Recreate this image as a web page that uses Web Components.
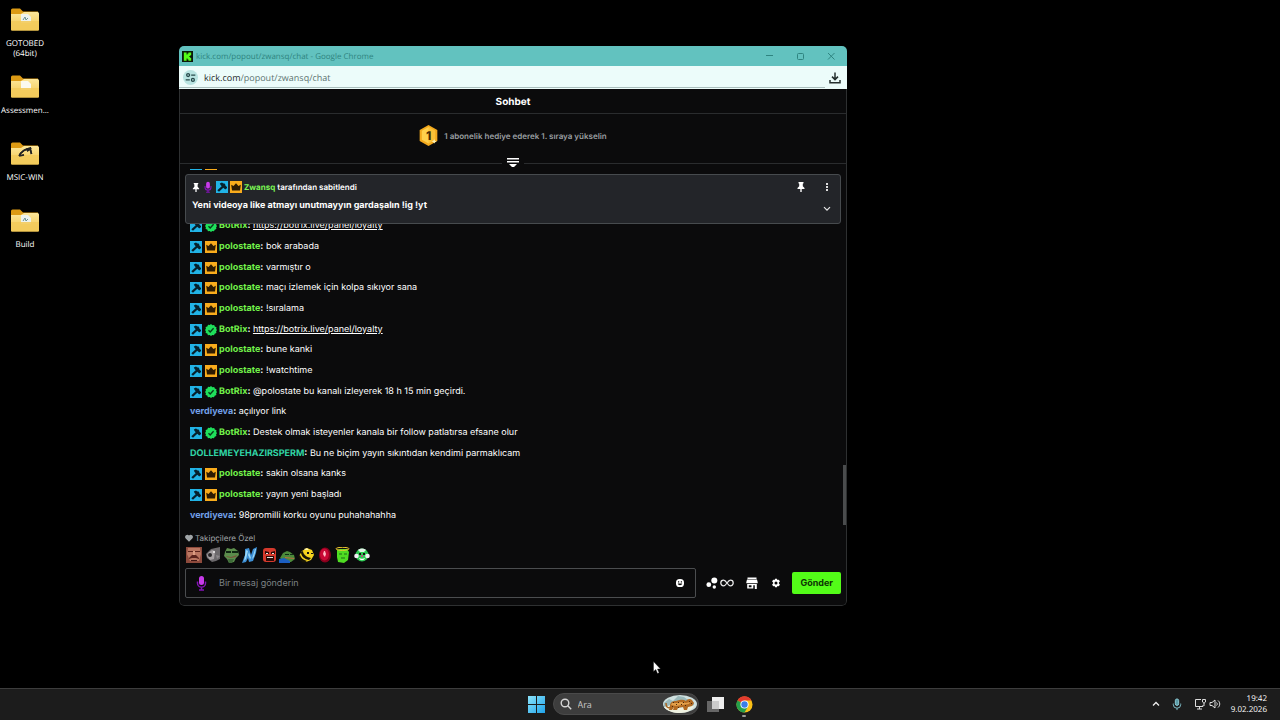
<!DOCTYPE html>
<html lang="tr">
<head>
<meta charset="utf-8">
<title>Masaüstü</title>
<style>
  html, body {
    height: 100%;
    margin: 0;
    background: #000;
    overflow: hidden;
  }
</style>
</head>
<body>
<desk-top>
  <desk-folder slot="files" mark="page">GOTOBED (64bit)</desk-folder>
  <desk-folder slot="files" mark="blank">Assessmen...</desk-folder>
  <desk-folder slot="files" mark="arrow">MSIC-WIN</desk-folder>
  <desk-folder slot="files" mark="page">Build</desk-folder>

  <browser-window slot="window" caption="kick.com/popout/zwansq/chat - Google Chrome" host="kick.com" path="/popout/zwansq/chat">
    <kick-chat>
      <chat-message badges="mod,crown"></chat-message>
      <chat-message></chat-message>
      <chat-message></chat-message>
      <chat-message badges="mod,verified" user="BotRix"><a href="https://botrix.live/panel/loyalty">https://botrix.live/panel/loyalty</a></chat-message>
      <chat-message badges="mod,crown" user="polostate">bok arabada</chat-message>
      <chat-message badges="mod,crown" user="polostate">varmıştır o</chat-message>
      <chat-message badges="mod,crown" user="polostate">maçı izlemek için kolpa sıkıyor sana</chat-message>
      <chat-message badges="mod,crown" user="polostate">!sıralama</chat-message>
      <chat-message badges="mod,verified" user="BotRix"><a href="https://botrix.live/panel/loyalty">https://botrix.live/panel/loyalty</a></chat-message>
      <chat-message badges="mod,crown" user="polostate">bune kanki</chat-message>
      <chat-message badges="mod,crown" user="polostate">!watchtime</chat-message>
      <chat-message badges="mod,verified" user="BotRix">@polostate bu kanalı izleyerek 18 h 15 min geçirdi.</chat-message>
      <chat-message user="verdiyeva" color="#72a0ea">açılıyor link</chat-message>
      <chat-message badges="mod,verified" user="BotRix">Destek olmak isteyenler kanala bir follow patlatırsa efsane olur</chat-message>
      <chat-message user="DOLLEMEYEHAZIRSPERM" color="#31d6a6">Bu ne biçim yayın sıkıntıdan kendimi parmaklıcam</chat-message>
      <chat-message badges="mod,crown" user="polostate">sakin olsana kanks</chat-message>
      <chat-message badges="mod,crown" user="polostate">yayın yeni başladı</chat-message>
      <chat-message user="verdiyeva" color="#72a0ea">98promilli korku oyunu puhahahahha</chat-message>
    </kick-chat>
  </browser-window>

  <task-bar slot="taskbar"></task-bar>
</desk-top>

<script>
const icons = {
  kick: ['0 0 12 12', '<path fill="#0b1a0b" d="M0 0h12v12H0z"/><path fill="#53fc18" d="M2 1.5h3v2.3h1V2.600h1V1.500h3v3H9v1H8v1h1v1h1v3H7V9.400H6V8.200H5v2.300H2z"/>'],
  tune: ['0 0 16 16', '<g fill="none" stroke="#27494a" stroke-width="1.900"><circle cx="4.500" cy="4.500" r="2.100"/><path d="M9 4.500h6M1 11.500h6"/><circle cx="11.500" cy="11.500" r="2.100"/></g>'],
  download: ['0 0 12 12', '<path fill="none" stroke="#26302f" stroke-width="1.500" d="M6 .5v6.700M3 4.600l3 3 3-3M1 8v2.800h10V8"/>'],
  minimize: ['0 0 8 8', '<path fill="none" stroke="#2f8480" d="M1 3.500h7"/>'],
  maximize: ['0 0 8 8', '<rect x="1.500" y="1.500" width="6" height="6" rx="1" fill="none" stroke="#2f8480"/>'],
  close: ['0 0 8 8', '<path fill="none" stroke="#2f8480" d="M1 1l6.500 6.500M7.500 1L1 7.500"/>'],
  mod: ['0 0 12 12', '<path fill="#21b3e6" d="M0 0h12v12H0z"/><path fill="#06202b" d="M3.800 2.600L6 1.400l1.300 1 .9-.2 1.200 1.500.1 1L11 6v1L9.800 8.200H9L7.300 6.800 3 10.800 1.300 9.300 5.700 5.200 4.600 4z"/>'],
  crown: ['0 0 12 12', '<path fill="#f9ac1c" d="M0 0h12v12H0z"/><path fill="#2d1b02" d="M1.200 3.800L3.500 5 6 2.300 8.500 5l2.300-1.200-.8 5.700H2z"/>'],
  verified: ['0 0 12 12', '<path fill="#1fe05b" d="M6 0l1.400 1.200L9.200.9l.6 1.700 1.700.6-.3 1.800L12 6l-.9 1.400.3 1.700-1.700.6-.7 1.600-1.700-.2L6 12l-1.300-1-1.800.2-.6-1.600-1.700-.7L.9 7.300 0 6l.9-1.300L.6 3l1.700-.6L3 .8l1.700.3z"/><path fill="none" stroke="#063b18" stroke-width="1.400" d="M3.500 6.200l1.700 1.700 3.400-3.600"/>'],
  pin: ['0 0 8 10', '<path fill="#fff" d="M1.500 0h5v1.200l-.7.500v2.600L7.500 6v1H4.700v3H3.300V7H.5V6l1.700-1.700V1.700l-.7-.5z"/>'],
  mic: ['0 0 10 16', '<rect x="2.500" y="1" width="5" height="9" rx="2.500" fill="#c83bea"/><path fill="none" stroke="#8213b5" stroke-width="1.500" d="M1 6.500v1.700a4 4 0 0 0 8 0V6.500M5 12.300V15M2.500 15h5"/>'],
  dots: ['0 0 4 10', '<path fill="#ddd" d="M1 1h2v2H1zM1 4h2v2H1zM1 7h2v2H1z"/>'],
  down: ['0 0 8 6', '<path fill="none" stroke="#e6e6e6" stroke-width="1.200" d="M1 1.200l3 3 3-3"/>'],
  collapse: ['0 0 12 10', '<path fill="#fff" d="M0 0h12v1.500H0zM0 3h12v1.500H0zM2 6h8L7 9H5z"/>'],
  rank: ['0 0 20 22', '<path fill="#f3a91d" d="M10 0l9.300 5.200v11.600L10 22 .7 16.800V5.200z"/><path fill="#ffd04c" d="M10 2l7 4v9.500L10 19.500 3 15.500V6z"/><path fill="#f8b72a" d="M17 6v9.500l-7 4V2z" opacity=".6"/><path fill="#fff0b0" d="M16 15l.9 1.500 1.600.7-1.600.8L16 19.500l-.9-1.500-1.600-.8 1.600-.7z"/>'],
  heart: ['0 0 8 8', '<path fill="#a0a5a8" d="M4 7.800L.7 4.400A2.100 2.100 0 0 1 4 1.600a2.100 2.100 0 0 1 3.300 2.800z"/>'],
  smile: ['0 0 10 10', '<rect x="1" y="1" width="8" height="8" rx="3.600" fill="#fff"/><path fill="#0b0b0b" d="M3 3.200h1.200v1.200H3zM5.800 3.200H7v1.200H5.800zM2.800 5.500h4.400c-.2 2.200-4.200 2.200-4.400 0z"/>'],
  bubbles: ['0 0 12 12', '<circle cx="8.300" cy="3.500" r="3" fill="#fff"/><circle cx="2.800" cy="7.700" r="2.400" fill="#fff"/><circle cx="8.300" cy="10" r="1.700" fill="#fff"/>'],
  infinity: ['0 0 14 8', '<path fill="none" stroke="#e9e9e9" stroke-width="1.300" d="M7 4C5.800 2.300 4.900 1.200 3.600 1.200a2.800 2.800 0 0 0 0 5.600C4.900 6.800 5.800 5.700 7 4s2.100-2.800 3.400-2.800a2.800 2.800 0 0 1 0 5.600C9.100 6.800 8.200 5.700 7 4z"/>'],
  store: ['0 0 12 12', '<path fill="#fff" fill-rule="evenodd" d="M1.500.5h9v1.400h-9zM1 2.500h10l.7 2.700v1.100H.3V5.200zM1.200 7h9.600v5H8.800V8.300H7.300V11.500H1.200zM2.800 8.200v2h2.700v-2z"/>'],
  gear: ['0 0 10 10', '<path fill="#fff" fill-rule="evenodd" d="M4 .7h2l.4 1.400 1.500-.4 1 1.700L7.900 4.500v1l1 1.100-1 1.700-1.500-.4L6 9.300H4l-.4-1.400-1.500.4-1-1.700 1-1.100v-1l-1-1.100 1-1.700 1.500.4zM5 3.500A1.500 1.500 0 1 0 5 6.500 1.500 1.500 0 0 0 5 3.500z"/>'],
  windows: ['0 0 17 17', '<defs><linearGradient id="w" x1="0" y1="0" x2="1" y2="1"><stop offset="0" stop-color="#8ce4fb"/><stop offset="1" stop-color="#1fa3ea"/></linearGradient></defs><path fill="url(#w)" d="M0 0h8v8H0zM9 0h8v8H9zM0 9h8v8H0zM9 9h8v8H9z"/>'],
  search: ['0 0 12 12', '<g fill="none" stroke="#d6d6d6" stroke-width="1.400"><circle cx="5" cy="5" r="3.800"/><path d="M7.800 7.800L11.200 11.200"/></g>'],
  leopard: ['0 0 34 18', '<ellipse cx="17" cy="9" rx="17" ry="9" fill="#cfe0df"/><path fill="#9bb9ba" d="M1 8l5-4 4 2 5-5 6 1 4 3 6 3v4H1z"/><path fill="#edf0df" d="M1 12l7-2 12 3 12-3c-3 5-8 8-15 8S4 16 1 12z"/><path fill="#b26a22" d="M7 11c0-4 3-5 6-5 4-1 7-2 10 0 1-2 4-3 6-1l2 3-2 3-4 1-1 3h-3l-1-3-5 1-1 2h-4l1-3-2 3H6z"/><path fill="#e3a04b" d="M9 8h5l4-1 5 1 4-1-1 2-7 1-6 1-5-1z"/><path fill="none" stroke="#a86522" stroke-width="1.500" d="M8 12c-4 2-5-1-5-4"/><path fill="#4b290c" d="M10 7h1v1h-1zM13 9h1v1h-1zM15 7h1v1h-1zM18 9h1v1h-1zM20 7h1v1h-1zM22 10h1v1h-1zM26 6h1v1h-1zM28 8h1v1h-1zM9 11h1v1H9zM15 12h1v1h-1z"/>'],
  taskview: ['0 0 17 15', '<path fill="#666" d="M0 4h12v11H0z"/><path fill="#eee" d="M5 0h12v12H5z"/><path fill="#ccc" d="M5 4h7v8H5z"/>'],
  chrome: ['0 0 18 18', '<circle cx="9" cy="9" r="8.500" fill="#fbc116"/><path fill="#e33b2e" d="M9 9L1.600 4.700A8.500 8.500 0 0 1 16.400 4.700H9z"/><path fill="#249f4b" d="M9 9L1.600 4.700A8.500 8.500 0 0 0 9 17.500l3.700-6.400z"/><circle cx="9" cy="9" r="4.300" fill="#fff"/><circle cx="9" cy="9" r="3.400" fill="#3a7de8"/>'],
  up: ['0 0 8 6', '<path fill="none" stroke="#eee" stroke-width="1.300" d="M1 4.500l3-3 3 3"/>'],
  traymic: ['0 0 10 14', '<rect x="3.200" y="1" width="3.600" height="7" rx="1.800" fill="#5a9aa5" stroke="#90d2dc"/><path fill="none" stroke="#84c6d0" d="M1 6v1a4 4 0 0 0 8 0V6M5 11v2"/>'],
  network: ['0 0 12 12', '<path fill="none" stroke="#ddd" d="M7 1.500H1.500v7H9V7M3 11h5M5.500 8.500V11M10 5v3"/><path fill="none" stroke="#ddd" d="M8.500 1.500h3V4L10 5.200 8.500 4z"/>'],
  speaker: ['0 0 12 12', '<path fill="none" stroke="#ddd" d="M1 4.500h2L6 2v8L3 7.500H1zM7.500 4.500c1 1 1 2 0 3M9 2.500c2.300 2 2.300 5 0 7"/>'],
  cursor: ['0 0 8 13', '<path fill="#fff" stroke="#111" stroke-width=".4" d="M.5.500v10l2.300-2 1.700 4 1.600-.7-1.600-3.800h3z"/>'],
  // channel emotes
  face: ['0 0 16 16', '<path fill="#8d4a3c" d="M0 0h16v16H0z"/><path fill="#ba7661" d="M2 1h12l1 6-2 7H4L1 7z"/><path fill="#5b241d" d="M2 4h5v1H2zM9 4h5v1H9zM3 11l3-3h4l3 3v1l-3-1H6l-3 1z"/><path fill="#db9d82" d="M7 4h2v4H7z"/><path fill="#3c1513" d="M5 13h6v1H5z"/>'],
  fish: ['0 0 16 16', '<path fill="#6b686b" d="M1 7l5-5 9-2v12l-4 2-4 1-5-4z"/><path fill="#a6a1a3" d="M3 6l4-3 3 1-1 8-4 1-3-4z"/><circle cx="5" cy="8" r="2" fill="#292729"/><circle cx="9" cy="5" r="1" fill="#eee"/><path fill="#8b878a" d="M11 8l4 1-3 3z"/>'],
  frog: ['0 0 16 16', '<path fill="#5b8d4c" d="M2 5l2-4 4 1 3-1 4 3 1 4-3 3-2 4-5 1-2-4-3-3z"/><path fill="#0f2612" d="M3 4h5v2H3zM9 4h6v2H9z"/><path fill="#78523a" d="M3 9l5 1 6-2-1 2-5 1-4-1z"/><path fill="#3e6b38" d="M5 12h6l-2 4H6z"/>'],
  wave: ['0 0 16 16', '<path fill="#3d8fd5" d="M3 2l4-1 2 7 2-6 4-2-1 6-3 8-4 1-1-4-2 4-4 1 3-8z"/><path fill="#9bd7f4" d="M4 3l2 1-2 8-2 2zM13 2l1 0-2 8-2 2zM7 5l2 6-1 1-2-4z"/>'],
  angry: ['0 0 16 16', '<rect x="2" y="1" width="13" height="14" rx="3" fill="#d5392c"/><path fill="#2b0b0a" d="M4 4l4 1v2H4zM10 5l4-1v3h-4zM5 9h8v5H5z"/><path fill="#e9e5df" d="M5 6h2v1H5zM11 6h2v1h-2zM6 10h6v1H6z"/>'],
  pepe: ['0 0 16 16', '<path fill="#4c8a3a" d="M1 11l3-5 4-2 3 1 4 3 1 4-4 3H5z"/><path fill="#102c16" d="M6 7h4v1H6zM11 7h4v1h-4z"/><path fill="#1b5ec2" d="M0 12l5-1 6 3v2H0z"/><path fill="#b96c42" d="M6 10l9 1v1l-9-1z"/>'],
  bee: ['0 0 16 16', '<path fill="#f4d21e" d="M1 9l3-5 5-3 5 2 2 5-3 5-5 2-5-2z"/><path fill="#161406" d="M3 5l2-1c0 3 3 6 8 7l-2 2C6 12 3 9 3 5zM0 9l2-1c1 3 3 5 7 6l-3 2C3 15 1 12 0 9z"/><path fill="#111" d="M9 5h2v2H9zM13 6h2v1h-2z"/><path fill="#fff2a0" d="M6 2l3-1 2 2H7z"/>'],
  gem: ['0 0 16 16', '<ellipse cx="8" cy="8" rx="6" ry="7.500" fill="#89001d"/><ellipse cx="7.500" cy="7.500" rx="4.500" ry="6" fill="#c90735"/><path fill="#ffb7c1" d="M7 4h1l1 3-1 3-1-1-1-2z"/>'],
  angel: ['0 0 16 16', '<path fill="#4fdc22" d="M2 3l3-1h7l2 3-1 8-4 3-6-1-1-5z"/><ellipse cx="7.500" cy="1.800" rx="6.500" ry="1.500" fill="none" stroke="#f3ca31"/><path fill="none" stroke="#1d6d17" d="M4 7h3M9 7h3M6 11h4"/>'],
  clown: ['0 0 16 16', '<circle cx="8" cy="8" r="6.500" fill="#2bc951"/><circle cx="2.500" cy="9" r="2.300" fill="#f3eef5"/><circle cx="13.500" cy="9" r="2.300" fill="#f3eef5"/><path fill="#e4f2e8" d="M4 3c2-2 6-2 8 0l-2 2H6z"/><path fill="#111" d="M5 6h2v2H5zM9 6h2v2H9z"/><circle cx="8" cy="9" r="1" fill="#d3398f"/><path fill="#fff" d="M5 11c2 1 4 1 6 0-1 3-5 3-6 0z"/>']
};

const icon = (name, width, height = width) =>
  `<svg viewBox="${icons[name][0]}" width="${width}" height="${height}" aria-hidden="true">${icons[name][1]}</svg>`;

const base = /* css */ `
  :host, * { box-sizing: border-box; }
  svg { display: block; flex: none; }
  button {
    display: flex;
    align-items: center;
    justify-content: center;
    padding: 0;
    border: 0;
    background: none;
    color: inherit;
    font: inherit;
    cursor: pointer;
  }
`;

class BaseElement extends HTMLElement {
  connectedCallback () {
    if (!this.shadowRoot) this.attachShadow({ mode: 'open' });
    this.shadowRoot.innerHTML = `<style>${base}${this.constructor.styles}</style>${this.render()}`;
  }
}

class DeskTop extends BaseElement {
  static get styles () {
    return /* css */ `
      :host {
        display: flex;
        flex-direction: column;
        height: 100vh;
        color: #fff;
        font-family: "Open Sans", "Noto Sans", sans-serif;
        text-rendering: geometricPrecision;
      }
      main { position: relative; flex: 1; min-height: 0; }
      .files {
        display: grid;
        grid-auto-rows: 67px;
        width: 50px;
        padding-top: 7px;
      }
      ::slotted(browser-window) {
        position: absolute;
        inset: 46px 433px 82px 179px;
      }
      .cursor { position: absolute; left: 51%; top: 661px; }
    `;
  }

  render () {
    return /* html */ `
      <main>
        <div class="files"><slot name="files"></slot></div>
        <slot name="window"></slot>
        <div class="cursor">${icon('cursor', 8, 13)}</div>
      </main>
      <slot name="taskbar"></slot>`;
  }
}

class DeskFolder extends BaseElement {
  static get styles () {
    return /* css */ `
      :host {
        display: flex;
        flex-direction: column;
        align-items: center;
        gap: 8px;
        font-size: 8px;
        line-height: 10px;
        text-align: center;
      }
    `;
  }

  render () {
    const marks = {
      page: '<path fill="#edf3ee" d="M10 7h7l3 3v6H10z"/><path fill="none" stroke="#6b9292" d="M12 13l2-3 1 3 2-2"/>',
      blank: '<path fill="#fbfaf0" d="M10 7h7l3 3v6H10z"/>',
      arrow: '<path fill="none" stroke="#222" stroke-width="1.600" d="M8 15c2-4 6-7 12-8l-4 3M8 15l5-1M19 7l1.500 6"/>'
    };
    const mark = this.getAttribute('mark');
    return /* html */ `
      <svg viewBox="0 0 28 24" width="28" height="24" aria-hidden="true">
        <defs><linearGradient id="f" x1="0" y1="0" x2="0" y2="1"><stop offset="0" stop-color="#fde79a"/><stop offset="1" stop-color="#f2c449"/></linearGradient></defs>
        <path fill="#dc9a14" d="M0 3q0-1.500 1.500-1.500H9l3 3h15V12H0z"/>
        <path fill="url(#f)" d="M0 7h10l3-2h13.500Q28 5 28 6.500v16q0 1-1 1H1q-1 0-1-1z"/>
        ${marks[mark]}
        <path fill="#f3cb5c" opacity=".9" d="M0 14h28v8.500q0 1-1 1H1q-1 0-1-1z"/>
        ${mark === 'arrow' ? marks.arrow : ''}
      </svg>
      <span><slot></slot></span>`;
  }
}

class BrowserWindow extends BaseElement {
  static get styles () {
    return /* css */ `
      :host {
        display: flex;
        flex-direction: column;
        border-radius: 5px;
        overflow: hidden;
      }
      .title {
        display: flex;
        align-items: center;
        gap: 3px;
        height: 20px;
        padding: 0 1px 0 3px;
        background: #62c2bf;
        color: #2f8480;
        font-size: 8px;
      }
      .title span { flex: 1; }
      .title .controls { display: flex; }
      .title button { width: 31px; height: 20px; }
      .address {
        display: flex;
        align-items: center;
        gap: 6px;
        height: 23px;
        padding: 0 6px 0 4px;
        background: linear-gradient(#a9bebc, #a9bebc) left bottom 1px / calc(100% - 22px) 1px no-repeat #ecfcfa;
        color: #5e7472;
        font-size: 9px;
      }
      .address b { color: #1d2b2a; font-weight: 400; }
      .address .url { flex: 1; }
      .address .info {
        width: 15px;
        height: 15px;
        border-radius: 50%;
        background: #b9e4e1;
      }
      ::slotted(*) {
        flex: 1;
        min-height: 0;
        border: 1px solid #2e3031;
        border-top: 0;
        border-radius: 0 0 5px 5px;
      }
    `;
  }

  render () {
    return /* html */ `
      <div class="title">
        ${icon('kick', 11)}
        <span>${this.getAttribute('caption')}</span>
        <div class="controls">
          <button aria-label="Simge durumuna küçült">${icon('minimize', 8)}</button>
          <button aria-label="Ekranı kapla">${icon('maximize', 8)}</button>
          <button aria-label="Kapat">${icon('close', 8)}</button>
        </div>
      </div>
      <div class="address">
        <button class="info" aria-label="Site bilgileri">${icon('tune', 11)}</button>
        <div class="url"><b>${this.getAttribute('host')}</b>${this.getAttribute('path')}</div>
        <button aria-label="İndirilenler">${icon('download', 12)}</button>
      </div>
      <slot></slot>`;
  }
}

class KickChat extends BaseElement {
  static get styles () {
    return /* css */ `
      :host {
        display: flex;
        flex-direction: column;
        background: #0b0b0c;
        color: #fff;
        font: 9px/12px Inter, sans-serif;
      }
      h1 {
        height: 25px;
        margin: 0;
        border-bottom: 1px solid #2a2c2e;
        font-size: 10px;
        line-height: 26px;
        font-weight: 700;
        text-align: center;
      }
      .divider {
        display: flex;
        align-items: center;
        gap: 5px;
        height: 12px;
      }
      .divider::before, .divider::after {
        content: "";
        flex: 1;
        height: 1px;
        background: #2a2c2e;
      }
      .log {
        position: relative;
        flex: 1;
        min-height: 0;
        display: flex;
        flex-direction: column;
        justify-content: flex-end;
        overflow: hidden;
      }
      .rows {
        flex: none;
        display: grid;
        grid-auto-rows: 1fr;
        height: 372px;
        padding: 0 10px;
      }
      pinned-message { position: absolute; inset: 5px 5px auto; }
      .thumb {
        position: absolute;
        right: 0;
        bottom: 1px;
        width: 3px;
        height: 60px;
        background: #4a4c4d;
      }
    `;
  }

  render () {
    return /* html */ `
      <h1>Sohbet</h1>
      <gift-banner rank="1">1 abonelik hediye ederek 1. sıraya yükselin</gift-banner>
      <div class="divider"><button aria-label="Daralt">${icon('collapse', 12, 10)}</button></div>
      <div class="log">
        <div class="rows"><slot></slot></div>
        <pinned-message user="Zwansq">Yeni videoya like atmayı unutmayyın gardaşalın !ig !yt</pinned-message>
        <div class="thumb"></div>
      </div>
      <chat-composer></chat-composer>`;
  }
}

class GiftBanner extends BaseElement {
  static get styles () {
    return /* css */ `
      :host {
        display: flex;
        align-items: center;
        justify-content: center;
        gap: 6px;
        height: 43px;
        color: #9a9ea1;
        font-size: 8px;
        font-weight: 600;
      }
      .rank { display: grid; place-items: center; }
      .rank > * { grid-area: 1 / 1; }
      .rank b { color: #4a2b05; font-size: 12px; font-weight: 800; }
    `;
  }

  render () {
    return /* html */ `
      <div class="rank">${icon('rank', 19, 21)}<b>${this.getAttribute('rank')}</b></div>
      <span><slot></slot></span>`;
  }
}

class PinnedMessage extends BaseElement {
  static get styles () {
    return /* css */ `
      :host {
        display: grid;
        grid-template-columns: 1fr auto;
        grid-template-rows: 14px 22px;
        align-items: center;
        height: 50px;
        padding: 5px 9px 0 6px;
        border: 1px solid #474b4e;
        border-radius: 3px;
        background: #232529;
        font-weight: 600;
      }
      .by { display: flex; align-items: center; gap: 2px; font-size: 8px; }
      .by > :first-child { margin-right: 2px; }
      .by > :nth-child(2) { margin-right: 2px; }
      .by b { color: #7cf655; font-weight: 700; }
      .text { padding-top: 2px; font-weight: 700; }
      .tools { display: flex; gap: 18px; }
      .more { height: 14px; justify-self: end; align-self: end; }
    `;
  }

  render () {
    return /* html */ `
      <div class="by">
        ${icon('pin', 8, 9)}${icon('mic', 8, 12)}${icon('mod', 12)}${icon('crown', 12)}
        <span><b>${this.getAttribute('user')}</b> tarafından sabitlendi</span>
      </div>
      <div class="tools">
        <button aria-label="Sabitlemeyi kaldır">${icon('pin', 8, 10)}</button>
        <button aria-label="Seçenekler">${icon('dots', 8, 10)}</button>
      </div>
      <div class="text"><slot></slot></div>
      <button class="more" aria-label="Genişlet">${icon('down', 8, 6)}</button>`;
  }
}

class ChatMessage extends BaseElement {
  static get styles () {
    return /* css */ `
      :host { display: flex; align-items: center; white-space: nowrap; }
      .badges { display: flex; gap: 3px; margin-right: 2px; }
      b { font-weight: 700; }
      ::slotted(a) { color: inherit; text-underline-offset: 1px; }
    `;
  }

  render () {
    const badges = this.getAttribute('badges');
    const user = this.getAttribute('user');
    const color = this.getAttribute('color') ?? '#72f14a';
    return /* html */ `
      ${badges ? `<span class="badges">${badges.split(',').map(name => icon(name, 12)).join('')}</span>` : ''}
      ${user ? `<span><b style="color:${color}">${user}</b><b>:</b> <slot></slot></span>` : ''}`;
  }
}

class ChatComposer extends BaseElement {
  static get styles () {
    return /* css */ `
      :host { display: block; padding: 5px 5px 7px; }
      .only {
        display: flex;
        align-items: center;
        gap: 2px;
        height: 14px;
        color: #a0a5a8;
        font-size: 8px;
      }
      .emotes {
        display: flex;
        justify-content: space-between;
        width: 184px;
        margin: 2px 1px 5px;
      }
      .row { display: flex; align-items: center; }
      .field {
        display: flex;
        align-items: center;
        flex: 1;
        height: 30px;
        margin-right: 10px;
        padding: 0 10px;
        border: 1px solid #4b4d4f;
        border-radius: 2px;
      }
      input {
        flex: 1;
        min-width: 0;
        margin: 0 12px;
        padding: 0;
        border: 0;
        outline: 0;
        background: none;
        color: #fff;
        font: inherit;
      }
      input::placeholder { color: #7c8284; opacity: 1; }
      .points { gap: 2px; margin-right: 12px; }
      .store { margin-right: 13px; }
      .gear { margin-right: 11px; }
      .send {
        height: 22px;
        padding: 0 8px;
        border-radius: 2px;
        background: #53fc18;
        color: #0d3205;
        font-weight: 700;
      }
    `;
  }

  render () {
    const emotes = ['face', 'fish', 'frog', 'wave', 'angry', 'pepe', 'bee', 'gem', 'angel', 'clown'];
    return /* html */ `
      <div class="only">${icon('heart', 8)}<span>Takipçilere Özel</span></div>
      <div class="emotes">${emotes.map(name => `<button aria-label="${name}">${icon(name, 16)}</button>`).join('')}</div>
      <div class="row">
        <div class="field">
          ${icon('mic', 11, 16)}
          <input type="text" aria-label="Bir mesaj gönderin" placeholder="Bir mesaj gönderin">
          <button aria-label="Emojiler">${icon('smile', 10)}</button>
        </div>
        <button class="points" aria-label="Puanlar">${icon('bubbles', 12)}${icon('infinity', 14, 8)}</button>
        <button class="store" aria-label="Mağaza">${icon('store', 12)}</button>
        <button class="gear" aria-label="Ayarlar">${icon('gear', 10)}</button>
        <button class="send">Gönder</button>
      </div>`;
  }
}

class TaskBar extends BaseElement {
  static get styles () {
    return /* css */ `
      :host {
        display: grid;
        grid-template-columns: 1fr auto 1fr;
        align-items: center;
        height: 32px;
        padding-bottom: 1px;
        border-top: 1px solid #3d3d3d;
        background: #1c1c1c;
      }
      .apps { grid-column: 2; display: flex; align-items: center; gap: 8px; }
      .search {
        display: flex;
        align-items: center;
        gap: 6px;
        width: 146px;
        height: 22px;
        padding: 0 1px 0 6px;
        border: 1px solid #4a4a4a;
        border-radius: 11px;
        background: #3d3d3d;
      }
      input {
        flex: 1;
        min-width: 0;
        padding: 0;
        border: 0;
        outline: 0;
        background: none;
        color: #fff;
        font: inherit;
        font-size: 9px;
      }
      input::placeholder { color: #c8c8c8; opacity: 1; }
      .chrome { position: relative; margin-left: 4px; }
      .chrome::after {
        content: "";
        position: absolute;
        bottom: -4px;
        width: 4px;
        height: 2px;
        border-radius: 1px;
        background: #999;
      }
      .tray {
        display: flex;
        align-items: center;
        justify-content: flex-end;
        padding-right: 13px;
      }
      .tray button + button { margin-left: 12px; }
      .tray .sound { gap: 3px; }
      time { margin-left: 10px; font-size: 8px; line-height: 11px; text-align: right; }
    `;
  }

  render () {
    return /* html */ `
      <div class="apps">
        <button aria-label="Başlat">${icon('windows', 17)}</button>
        <label class="search">${icon('search', 12)}<input type="text" aria-label="Ara" placeholder="Ara">${icon('leopard', 34, 18)}</label>
        <button aria-label="Görev görünümü">${icon('taskview', 17, 15)}</button>
        <button class="chrome" aria-label="Google Chrome">${icon('chrome', 17)}</button>
      </div>
      <div class="tray">
        <button aria-label="Gizli simgeler">${icon('up', 8, 6)}</button>
        <button aria-label="Mikrofon">${icon('traymic', 10, 13)}</button>
        <button class="sound" aria-label="Ağ ve ses">${icon('network', 12)}${icon('speaker', 12)}</button>
        <time datetime="2026-02-09T19:42">19:42<br>9.02.2026</time>
      </div>`;
  }
}

customElements.define('desk-top', DeskTop);
customElements.define('desk-folder', DeskFolder);
customElements.define('browser-window', BrowserWindow);
customElements.define('kick-chat', KickChat);
customElements.define('gift-banner', GiftBanner);
customElements.define('pinned-message', PinnedMessage);
customElements.define('chat-message', ChatMessage);
customElements.define('chat-composer', ChatComposer);
customElements.define('task-bar', TaskBar);
</script>
</body>
</html>
